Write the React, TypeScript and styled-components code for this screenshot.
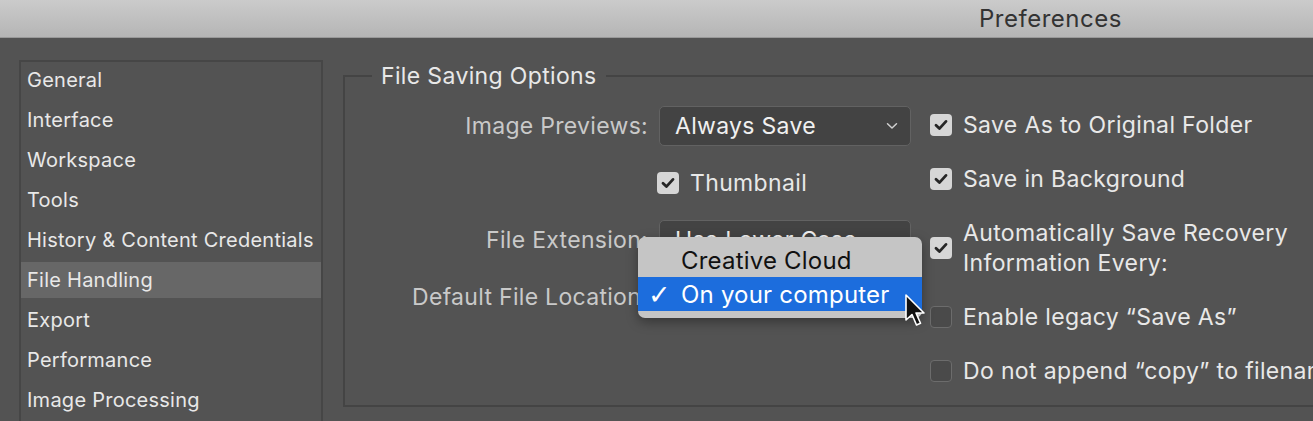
import React from "react";
import styled, { createGlobalStyle } from "styled-components";

const GlobalStyle = createGlobalStyle`
  html, body {
    margin: 0;
    padding: 0;
    background: #535353;
    overflow: hidden;
  }
  body {
    font-family: Inter, "Noto Sans", "Liberation Sans", sans-serif;
  }
`;

const Window = styled.div`
  width: 1313px;
  height: 421px;
  background: #535353;
  overflow: hidden;
`;

const TitleBar = styled.div`
  height: 37px;
  background: linear-gradient(#cbcbcb, #b5b5b5);
  border-bottom: 1px solid #999999;
  display: flex;
  align-items: center;
  padding-left: 979px;
`;

const Title = styled.div`
  font-size: 24px;
  color: #333333;
  letter-spacing: 0.5px;
`;

const Body = styled.div`
  display: flex;
  align-items: flex-start;
  padding: 22px 0 0 19px;
`;

const Sidebar = styled.ul`
  list-style: none;
  margin: 0;
  padding: 0;
  width: 300px;
  height: 400px;
  border: 2px solid #464646;
  display: flex;
  flex-direction: column;
  gap: 4px;
  flex-shrink: 0;
`;

const NavItem = styled.li<{ $active?: boolean }>`
  height: 36px;
  display: flex;
  align-items: center;
  padding-left: 6px;
  font-size: 20px;
  letter-spacing: 0.25px;
  color: #e8e8e8;
  background: ${(p) => (p.$active ? "#676767" : "transparent")};
`;

const Group = styled.fieldset`
  margin: 4px 0 0 20px;
  padding: 18px 0 0 0;
  width: 1000px;
  height: 321px;
  border: 2px solid #444444;
  flex-shrink: 0;
  display: flex;
  align-items: flex-start;
  gap: 19px;
`;

const Legend = styled.legend`
  margin-left: 27px;
  padding: 0 9px;
  font-size: 23px;
  line-height: 24px;
  letter-spacing: 0.35px;
  color: #e8e8e8;
`;

const FormGrid = styled.div`
  display: grid;
  grid-template-columns: 303px 252px;
  grid-auto-rows: 40px;
  column-gap: 11px;
  row-gap: 17px;
  align-items: center;
`;

const Label = styled.div`
  text-align: right;
  font-size: 23px;
  letter-spacing: 0.3px;
  color: #c9c9c9;
  white-space: nowrap;
`;

const Control = styled.div`
  position: relative;
  display: flex;
  align-items: center;
  height: 40px;
`;

const Select = styled.div`
  box-sizing: border-box;
  width: 252px;
  height: 40px;
  background: #434343;
  border: 1px solid #626262;
  border-radius: 5px;
  display: flex;
  align-items: center;
  justify-content: space-between;
  padding: 0 12px 0 15px;
  font-size: 23px;
  letter-spacing: 0.3px;
  color: #f0f0f0;
  white-space: nowrap;
  overflow: hidden;
`;

const CheckRow = styled.label`
  display: flex;
  align-items: center;
  gap: 11px;
  font-size: 23px;
  letter-spacing: 0.35px;
  line-height: 30px;
  color: #e8e8e8;
  white-space: nowrap;
`;

const Box = styled.span<{ $checked?: boolean }>`
  box-sizing: border-box;
  width: 22px;
  height: 22px;
  flex-shrink: 0;
  border-radius: 4px;
  display: flex;
  align-items: center;
  justify-content: center;
  background: ${(p) => (p.$checked ? "#d6d6d6" : "#4a4a4a")};
  border: ${(p) => (p.$checked ? "none" : "1.5px solid #6c6c6c")};
`;

const Options = styled.div`
  display: flex;
  flex-direction: column;
  gap: 24px;
  padding-top: 4px;
`;

const Popup = styled.div`
  position: absolute;
  left: -21px;
  top: -40px;
  width: 284px;
  box-sizing: border-box;
  padding: 6px 0 7px;
  background: #c5c5c5;
  border-radius: 7px;
  box-shadow: 0 4px 12px rgba(0, 0, 0, 0.35);
  z-index: 2;
`;

const MenuItem = styled.div<{ $selected?: boolean }>`
  height: 34px;
  display: flex;
  align-items: center;
  padding-left: 10px;
  font-size: 24px;
  letter-spacing: 0.2px;
  color: ${(p) => (p.$selected ? "#ffffff" : "#111111")};
  background: ${(p) => (p.$selected ? "#1c6ddd" : "transparent")};
  white-space: nowrap;
`;

const Tick = styled.span`
  width: 33px;
  font-size: 27px;
  line-height: 1;
  font-family: "DejaVu Sans", sans-serif;
`;

const Cursor = styled.svg`
  position: absolute;
  left: 245px;
  top: 16px;
  z-index: 3;
`;

const Chevron = () => (
  <svg width="12" height="8" viewBox="0 0 12 8">
    <path d="M1.5 1.8 L6 6 L10.5 1.8" fill="none" stroke="#d0d0d0" strokeWidth="1.5" strokeLinecap="round" strokeLinejoin="round" />
  </svg>
);

const CheckMark = () => (
  <svg width="14" height="12" viewBox="0 0 14 12">
    <path d="M2 6.3 L5.4 9.6 L12 2.4" fill="none" stroke="#262626" strokeWidth="2.8" strokeLinecap="round" strokeLinejoin="round" />
  </svg>
);

const Check: React.FC<{ checked?: boolean; children: React.ReactNode }> = ({ checked, children }) => (
  <CheckRow>
    <Box $checked={checked}>{checked && <CheckMark />}</Box>
    <span>{children}</span>
  </CheckRow>
);

const navItems = [
  "General",
  "Interface",
  "Workspace",
  "Tools",
  "History & Content Credentials",
  "File Handling",
  "Export",
  "Performance",
  "Image Processing",
];

export default function App() {
  return (
    <Window>
      <GlobalStyle />
      <TitleBar>
        <Title>Preferences</Title>
      </TitleBar>
      <Body>
        <Sidebar>
          {navItems.map((n) => (
            <NavItem key={n} $active={n === "File Handling"}>
              {n}
            </NavItem>
          ))}
        </Sidebar>
        <Group>
          <Legend>File Saving Options</Legend>
          <FormGrid>
            <Label>Image Previews:</Label>
            <Control>
              <Select>
                <span>Always Save</span>
                <Chevron />
              </Select>
            </Control>
            <div />
            <Control style={{ marginLeft: -2 }}>
              <Check checked>Thumbnail</Check>
            </Control>
            <Label>File Extension:</Label>
            <Control>
              <Select>
                <span>Use Lower Case</span>
                <Chevron />
              </Select>
            </Control>
            <Label>Default File Location:</Label>
            <Control>
              <Select>
                <span>On your computer</span>
                <Chevron />
              </Select>
              <Popup>
                <MenuItem>
                  <Tick />
                  Creative Cloud
                </MenuItem>
                <MenuItem $selected>
                  <Tick>✓</Tick>
                  On your computer
                </MenuItem>
              </Popup>
              <Cursor width="24" height="36" viewBox="0 0 24 36">
                <path d="M2 2 L2 27 L8 21.5 L12.5 32 L16.5 30.3 L12 20 L20 20 Z" fill="#111" stroke="#fff" strokeWidth="1.6" strokeLinejoin="round" />
              </Cursor>
            </Control>
          </FormGrid>
          <Options>
            <Check checked>Save As to Original Folder</Check>
            <Check checked>Save in Background</Check>
            <Check checked>
              Automatically Save Recovery
              <br />
              Information Every:
            </Check>
            <Check>Enable legacy “Save As”</Check>
            <Check>Do not append “copy” to filenames</Check>
          </Options>
        </Group>
      </Body>
    </Window>
  );
}
